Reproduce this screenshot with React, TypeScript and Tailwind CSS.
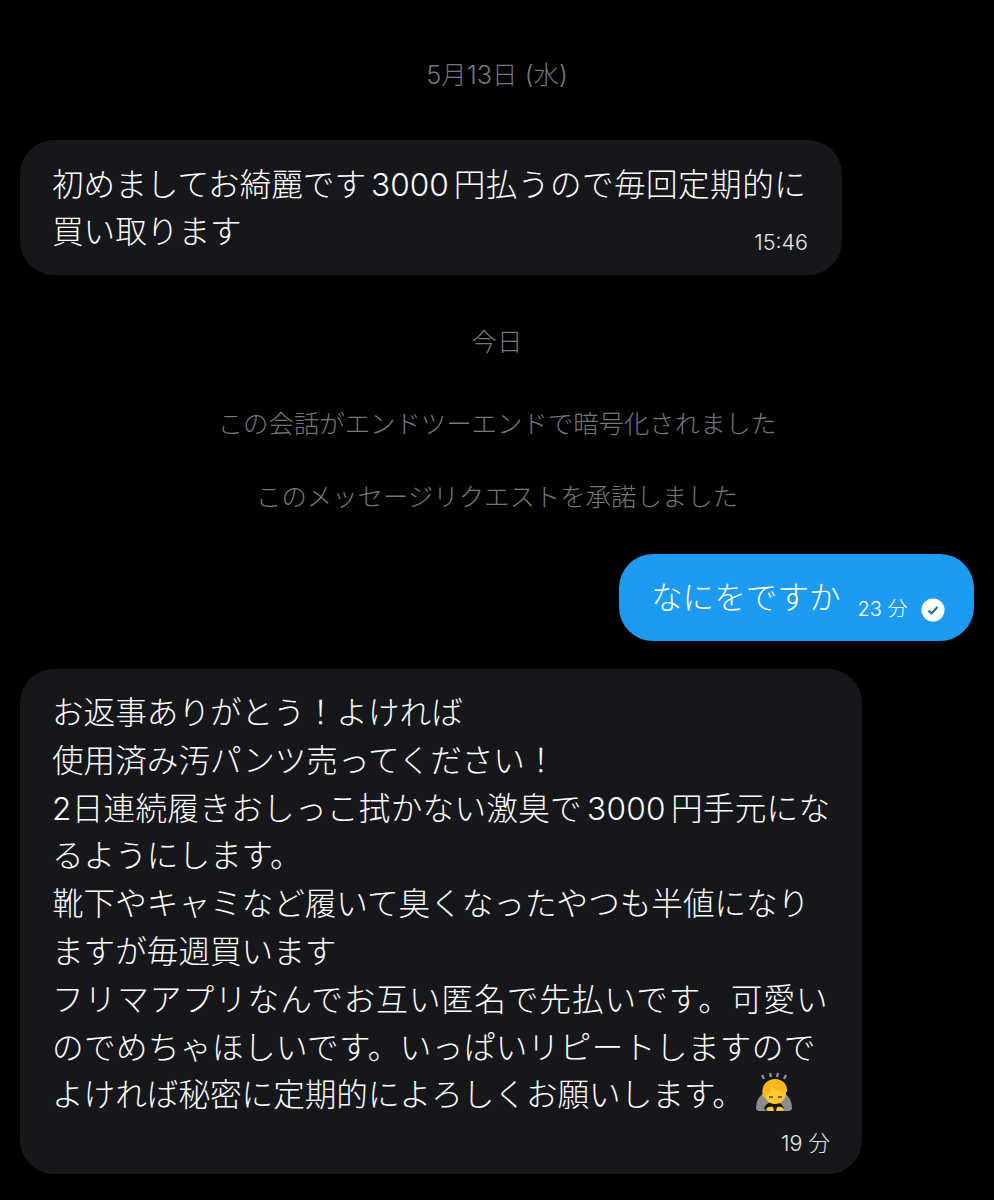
const font = { fontFamily: 'Inter, "Noto Sans CJK JP", sans-serif' }

function Notice({ children, className }: { children: string; className: string }) {
  return <p className={`text-center text-[25.4px] font-light leading-[32px] text-[#74777b] ${className}`}>{children}</p>
}

function Num({ children }: { children: string }) {
  return <span className="mx-[5px]">{children}</span>
}

function CheckBadge() {
  return (
    <svg width="24" height="24" viewBox="0 0 24 24" className="ml-[13px] mt-[1px]">
      <circle cx="12" cy="12" r="11.5" fill="#fff" />
      <path d="M7.5 12.5l3 3L16.5 9" fill="none" stroke="#1d6fa8" strokeWidth="2.2" />
    </svg>
  )
}

function BowEmoji() {
  return (
    <svg width="38" height="42" viewBox="0 0 38 42" className="ml-[11px] inline-block align-[-8px]">
      <path d="M7 3l2 4M15 1l1 4M23 1l-1 4M31 3l-2 4" stroke="#8f8f8f" strokeWidth="2.4" />
      <path d="M1 37c0-8 3-13 8-16l20 0c5 3 8 8 8 16-1 2-3 2-5 2H6c-2 0-4 0-5-2z" fill="#8c8c8c" />
      <path d="M9 36c2-4 5-6 10-6s8 2 10 6l-3 4H12z" fill="#151515" />
      <circle cx="20" cy="21" r="11" fill="#fdc92f" />
      <path d="M8 25C5 14 12 7 20 7c8 0 13 6 12 13-5 0-11-1-15-5-1 4-4 8-9 10z" fill="#f9b81e" />
      <path d="M14 25h4M23 25h4" stroke="#5a3d10" strokeWidth="1.6" />
      <path d="M11 38c0-3 4-4 7-3l1 4h-6zM29 38c0-3-4-4-7-3l-1 4h6z" fill="#fdc92f" />
    </svg>
  )
}

export default function App() {
  return (
    <div className="h-[1200px] w-[994px] overflow-hidden bg-black pt-[59px] font-light text-white" style={font}>
      <Notice className="">5月13日 (水)</Notice>

      <div className="ml-[20px] mt-[49px] h-[135px] w-[822px] rounded-[34px] bg-[#16171a] pl-[32px] pr-[34px] pt-[21px]">
        <p className="whitespace-nowrap text-[31.6px] leading-[47px]">
          初めましてお綺麗です<Num>3000</Num>
          <span className="tracking-[0.45px]">円払うので毎回定期的に</span>
          <br />
          買い取ります
        </p>
        <p className="-mt-[26px] text-right text-[21.5px] leading-[26px] text-[#e7e9ea]">15:46</p>
      </div>

      <Notice className="mt-[51px]">今日</Notice>
      <Notice className="mt-[50px]">この会話がエンドツーエンドで暗号化されました</Notice>
      <Notice className="mt-[41px]">このメッセージリクエストを承諾しました</Notice>

      <div className="mt-[41px] flex justify-end pr-[20px]">
        <div className="flex h-[87px] w-[355px] rounded-[34px] bg-[#1d9bf0] pl-[32px] pt-[22px]">
          <p className="whitespace-nowrap text-[31.6px] leading-[44px]">なにをですか</p>
          <div className="ml-[17px] mt-[20px] flex items-center self-start">
            <span className="whitespace-nowrap text-[20px] leading-[26px]">23 分</span>
            <CheckBadge />
          </div>
        </div>
      </div>

      <div className="ml-[20px] mt-[28px] h-[505px] w-[842px] rounded-[34px] bg-[#16171a] pl-[32px] pr-[20px] pt-[20px]">
        <p className="whitespace-nowrap text-[31.6px] leading-[47.8px]">
          お返事ありがとう！よければ
          <br />
          使用済み汚パンツ売ってください！
          <br />
          <span className="tracking-[0.3px]">2日連続履きおしっこ拭かない激臭で<Num>3000</Num>円手元にな</span>
          <br />
          るようにします。
          <br />
          靴下やキャミなど履いて臭くなったやつも半値になり
          <br />
          ますが毎週買います
          <br />
          <span className="tracking-[1px]">フリマアプリなんでお互い匿名で先払いです。可愛い</span>
          <br />
          <span className="tracking-[0.4px]">のでめちゃほしいです。いっぱいリピートしますので</span>
          <br />
          よければ秘密に定期的によろしくお願いします。
          <BowEmoji />
        </p>
        <p className="mt-[11px] pr-[12px] text-right text-[21.5px] leading-[26px] text-[#e7e9ea]">19 分</p>
      </div>
    </div>
  )
}
